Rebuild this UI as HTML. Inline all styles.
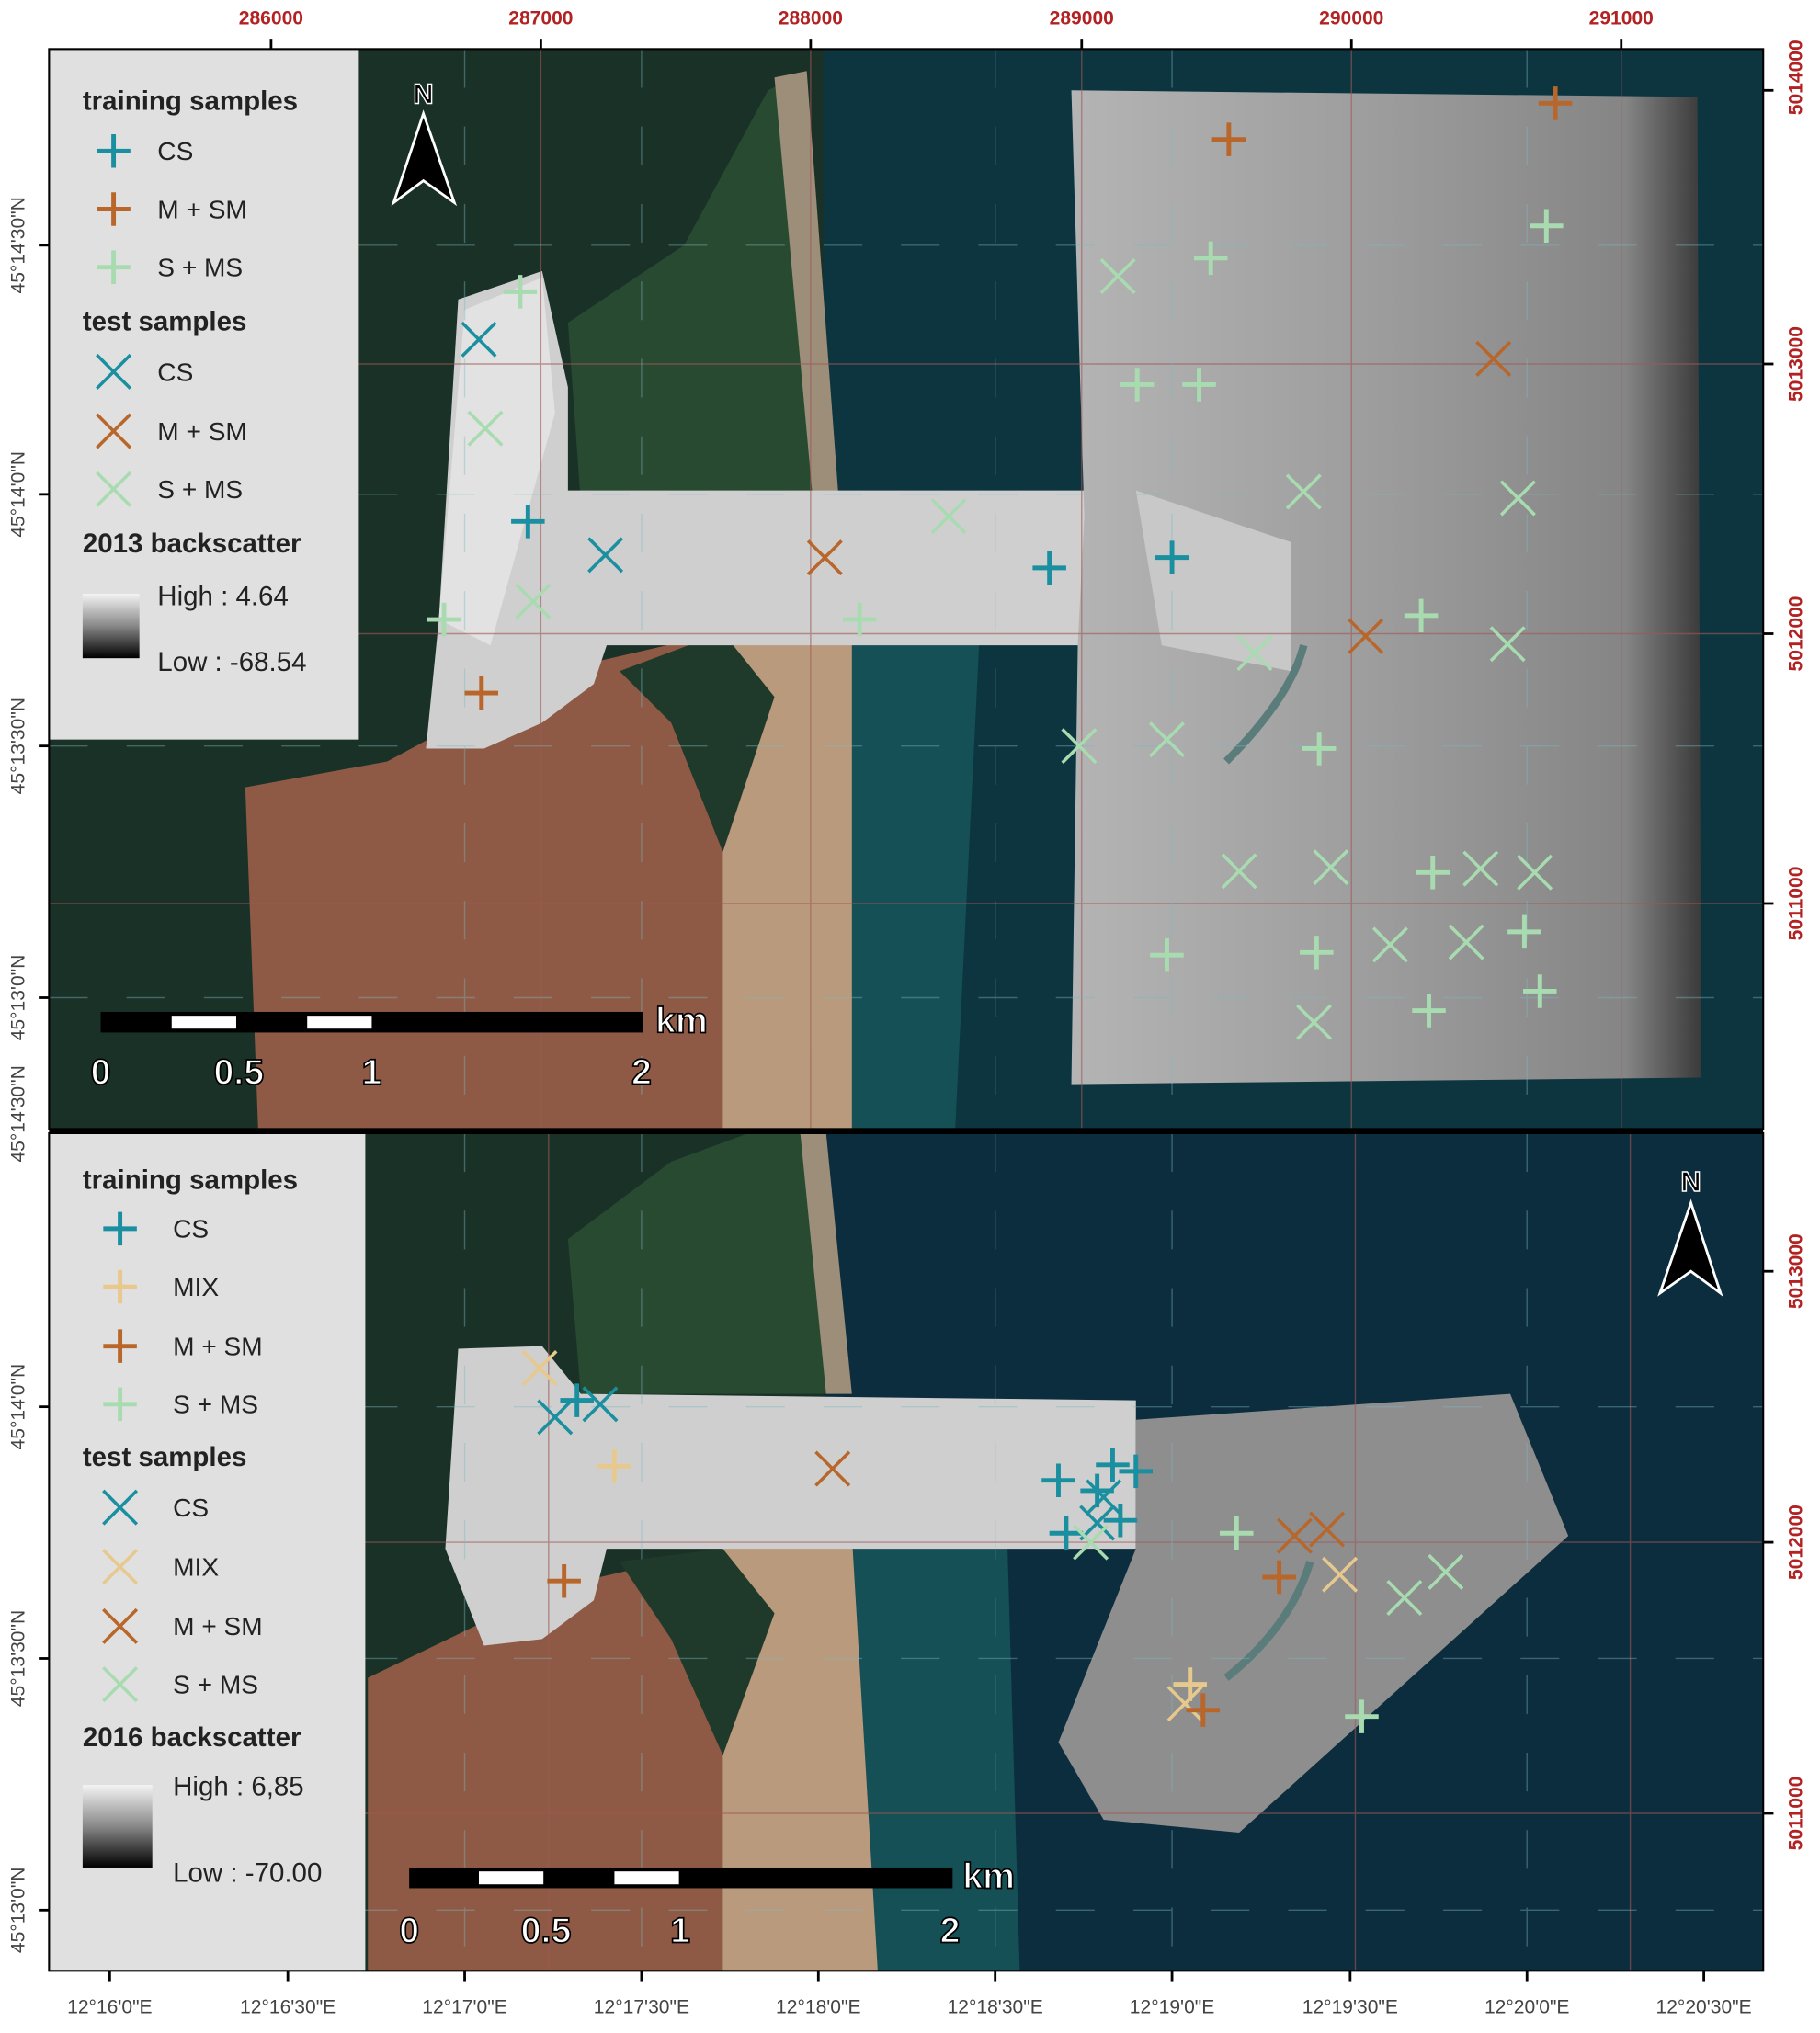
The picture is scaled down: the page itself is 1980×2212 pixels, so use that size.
<!DOCTYPE html>
<html><head><meta charset="utf-8"><style>
html,body{margin:0;padding:0;background:#fff;}
svg{display:block;}
text{font-family:"Liberation Sans",sans-serif;}
</style></head><body>
<svg width="1980" height="2212" viewBox="0 0 1410 1575.2" preserveAspectRatio="none" xmlns="http://www.w3.org/2000/svg">
<defs>
<linearGradient id="g1" x1="0" y1="0" x2="0" y2="1"><stop offset="0" stop-color="#f4f4f4"/><stop offset="0.5" stop-color="#888"/><stop offset="1" stop-color="#000"/></linearGradient>
<linearGradient id="sv" x1="0" y1="0" x2="1" y2="0"><stop offset="0" stop-color="#b4b4b4"/><stop offset="0.5" stop-color="#9c9c9c"/><stop offset="0.88" stop-color="#858585"/><stop offset="1" stop-color="#3a3a3a"/></linearGradient>
<clipPath id="c1"><rect x="38" y="38" width="1328" height="837"/></clipPath>
<clipPath id="c2"><rect x="38" y="878" width="1328" height="649"/></clipPath>
<g id="plus"><path d="M-13 0H13M0 -13V13" stroke-width="3.5" fill="none"/></g>
<g id="x"><path d="M-13 -13L13 13M13 -13L-13 13" stroke-width="2.5" fill="none"/></g>
</defs>
<rect width="1410" height="1576" fill="#fff"/>

<!-- TOP MAP -->
<g clip-path="url(#c1)">
<rect x="38" y="38" width="1328" height="837" fill="#0c3540"/>
<rect x="38" y="38" width="600" height="837" fill="#1a3128"/>
<polygon points="440,250 530,190 595,70 625,55 640,390 450,390" fill="#284a30"/>
<polygon points="600,60 625,55 650,390 630,390" fill="#9c8e78"/>
<polygon points="190,610 300,590 430,520 560,490 650,500 620,875 200,875" fill="#8e5a45"/>
<polygon points="560,490 660,480 700,560 660,875 560,875" fill="#b99a7c"/>
<polygon points="660,480 760,470 740,875 660,875" fill="#145055"/>
<polygon points="480,520 560,490 600,540 560,660 520,560" fill="#1f3a2a"/>
<polygon points="355,232 420,210 440,300 440,380 470,380 900,380 900,500 470,500 460,530 420,560 375,580 330,580 340,480" fill="#cfcfcf"/>
<polygon points="360,240 420,215 430,320 380,500 340,480" fill="#e2e2e2"/>
<polygon points="830,70 1315,75 1318,835 830,840 835,500 840,400" fill="url(#sv)"/>
<polygon points="880,380 1000,420 1000,520 900,500" fill="#c8c8c8"/>
<path d="M950,590 Q1000,540 1010,500" stroke="#5a7c7a" stroke-width="6" fill="none"/>
<g stroke="#a05858" stroke-width="1" opacity="0.6"><line x1="38" y1="282" x2="1366" y2="282"/><line x1="38" y1="491" x2="1366" y2="491"/><line x1="38" y1="700" x2="1366" y2="700"/><line x1="419" y1="38" x2="419" y2="875"/><line x1="628" y1="38" x2="628" y2="875"/><line x1="838" y1="38" x2="838" y2="875"/><line x1="1047" y1="38" x2="1047" y2="875"/><line x1="1256" y1="38" x2="1256" y2="875"/></g>
<g stroke="#7fb8c0" stroke-width="1" stroke-dasharray="30,30" opacity="0.4"><line x1="38" y1="190" x2="1366" y2="190"/><line x1="38" y1="383" x2="1366" y2="383"/><line x1="38" y1="578" x2="1366" y2="578"/><line x1="38" y1="773" x2="1366" y2="773"/><line x1="360" y1="38" x2="360" y2="875"/><line x1="497" y1="38" x2="497" y2="875"/><line x1="771" y1="38" x2="771" y2="875"/><line x1="908" y1="38" x2="908" y2="875"/><line x1="1183" y1="38" x2="1183" y2="875"/></g>
<g stroke="#1a8fa0"><use href="#plus" x="409" y="404"/><use href="#plus" x="813" y="440"/><use href="#plus" x="908" y="432"/><use href="#x" x="371" y="263"/><use href="#x" x="469" y="430"/></g>
<g stroke="#b8662a"><use href="#plus" x="952" y="108"/><use href="#plus" x="1205" y="80"/><use href="#plus" x="373" y="537"/><use href="#x" x="639" y="432"/><use href="#x" x="1157" y="278"/><use href="#x" x="1058" y="493"/></g>
<g stroke="#a8dcb0"><use href="#plus" x="403" y="226"/><use href="#plus" x="344" y="480"/><use href="#plus" x="666" y="480"/><use href="#plus" x="938" y="200"/><use href="#plus" x="881" y="298"/><use href="#plus" x="929" y="298"/><use href="#plus" x="1198" y="175"/><use href="#plus" x="1101" y="477"/><use href="#plus" x="1022" y="580"/><use href="#plus" x="1110" y="676"/><use href="#plus" x="904" y="740"/><use href="#plus" x="1020" y="738"/><use href="#plus" x="1181" y="722"/><use href="#plus" x="1107" y="783"/><use href="#plus" x="1193" y="768"/>
<use href="#x" x="376" y="332"/><use href="#x" x="413" y="466"/><use href="#x" x="735" y="400"/><use href="#x" x="866" y="214"/><use href="#x" x="1010" y="381"/><use href="#x" x="1176" y="386"/><use href="#x" x="972" y="506"/><use href="#x" x="1168" y="499"/><use href="#x" x="836" y="578"/><use href="#x" x="904" y="573"/><use href="#x" x="960" y="675"/><use href="#x" x="1031" y="672"/><use href="#x" x="1147" y="673"/><use href="#x" x="1189" y="676"/><use href="#x" x="1077" y="732"/><use href="#x" x="1136" y="730"/><use href="#x" x="1018" y="792"/></g>
<rect x="78" y="784" width="420" height="16" fill="#000"/><rect x="133" y="787" width="50" height="10" fill="#fff"/><rect x="238" y="787" width="50" height="10" fill="#fff"/>
<g font-size="28" font-weight="bold" fill="#fff" stroke="#000" stroke-width="1.2" text-anchor="middle"><text x="78" y="840">0</text><text x="185" y="840">0.5</text><text x="288" y="840">1</text><text x="497" y="840">2</text><text x="528" y="800">km</text></g>
<text x="328" y="80" font-family="Liberation Serif" font-weight="bold" font-size="22" fill="#000" stroke="#fff" stroke-width="1" text-anchor="middle">N</text>
<polygon points="328,88 352,157 328,140 305,157" fill="#000" stroke="#fff" stroke-width="2"/>
<rect x="38" y="38" width="240" height="535" fill="#e0e0e0"/>
<g font-size="20" fill="#222">
<text x="64" y="85" font-weight="bold" font-size="21">training samples</text>
<g stroke="#1a8fa0"><use href="#plus" x="88" y="117"/></g><text x="122" y="124">CS</text>
<g stroke="#b8662a"><use href="#plus" x="88" y="162"/></g><text x="122" y="169">M + SM</text>
<g stroke="#a8dcb0"><use href="#plus" x="88" y="207"/></g><text x="122" y="214">S + MS</text>
<text x="64" y="256" font-weight="bold" font-size="21">test samples</text>
<g stroke="#1a8fa0"><use href="#x" x="88" y="288"/></g><text x="122" y="295">CS</text>
<g stroke="#b8662a"><use href="#x" x="88" y="334"/></g><text x="122" y="341">M + SM</text>
<g stroke="#a8dcb0"><use href="#x" x="88" y="379"/></g><text x="122" y="386">S + MS</text>
<text x="64" y="428" font-weight="bold" font-size="21">2013 backscatter</text>
<rect x="64" y="460" width="44" height="50" fill="url(#g1)"/>
<text x="122" y="469" font-size="21">High : 4.64</text>
<text x="122" y="520" font-size="21">Low : -68.54</text>
</g>
</g>
<rect x="38" y="38" width="1328" height="837" fill="none" stroke="#000" stroke-width="1.5"/>
<rect x="38" y="874" width="1328" height="4" fill="#000"/>

<!-- BOTTOM MAP -->
<g clip-path="url(#c2)">
<rect x="38" y="878" width="1328" height="649" fill="#0c2d3e"/>
<rect x="38" y="878" width="600" height="649" fill="#1a3128"/>
<polygon points="440,960 520,900 580,878 640,878 650,1080 450,1080" fill="#284a30"/>
<polygon points="620,878 640,878 660,1080 640,1080" fill="#9c8e78"/>
<polygon points="285,1300 430,1230 560,1200 650,1210 620,1527 285,1527" fill="#8e5a45"/>
<polygon points="560,1200 660,1190 700,1260 680,1527 560,1527" fill="#b99a7c"/>
<polygon points="660,1190 780,1180 790,1527 680,1527" fill="#145055"/>
<polygon points="480,1210 560,1200 600,1250 560,1360 520,1270" fill="#1f3a2a"/>
<polygon points="355,1045 420,1043 450,1080 880,1085 880,1200 470,1200 460,1240 420,1270 375,1275 345,1200" fill="#cfcfcf"/>
<polygon points="880,1100 1170,1080 1215,1190 960,1420 855,1410 820,1350 880,1200" fill="#8e8e8e"/>
<path d="M950,1300 Q1000,1260 1015,1210" stroke="#5a7c7a" stroke-width="6" fill="none"/>
<g stroke="#a05858" stroke-width="1" opacity="0.6"><line x1="38" y1="1195" x2="1366" y2="1195"/><line x1="38" y1="1405" x2="1366" y2="1405"/><line x1="425" y1="878" x2="425" y2="1527"/><line x1="1050" y1="878" x2="1050" y2="1527"/><line x1="1263" y1="878" x2="1263" y2="1527"/></g>
<g stroke="#7fb8c0" stroke-width="1" stroke-dasharray="30,30" opacity="0.4"><line x1="38" y1="1090" x2="1366" y2="1090"/><line x1="38" y1="1285" x2="1366" y2="1285"/><line x1="38" y1="1480" x2="1366" y2="1480"/><line x1="360" y1="878" x2="360" y2="1527"/><line x1="497" y1="878" x2="497" y2="1527"/><line x1="771" y1="878" x2="771" y2="1527"/><line x1="908" y1="878" x2="908" y2="1527"/><line x1="1183" y1="878" x2="1183" y2="1527"/></g>
<g stroke="#1a8fa0"><use href="#plus" x="820" y="1147"/><use href="#plus" x="826" y="1188"/><use href="#plus" x="862" y="1135"/><use href="#plus" x="880" y="1140"/><use href="#plus" x="868" y="1178"/><use href="#plus" x="850" y="1155"/><use href="#plus" x="447" y="1085"/><use href="#x" x="430" y="1098"/><use href="#x" x="465" y="1088"/><use href="#x" x="855" y="1160"/><use href="#x" x="850" y="1180"/></g>
<g stroke="#e7c98e"><use href="#plus" x="476" y="1136"/><use href="#plus" x="922" y="1305"/><use href="#x" x="418" y="1060"/><use href="#x" x="1038" y="1220"/><use href="#x" x="918" y="1320"/></g>
<g stroke="#b8662a"><use href="#plus" x="437" y="1225"/><use href="#plus" x="991" y="1222"/><use href="#plus" x="932" y="1325"/><use href="#x" x="645" y="1138"/><use href="#x" x="1003" y="1190"/><use href="#x" x="1028" y="1185"/></g>
<g stroke="#a8dcb0"><use href="#plus" x="958" y="1188"/><use href="#plus" x="1055" y="1330"/><use href="#x" x="845" y="1195"/><use href="#x" x="1088" y="1238"/><use href="#x" x="1120" y="1218"/></g>
<rect x="317" y="1447" width="421" height="16" fill="#000"/><rect x="371" y="1450" width="50" height="10" fill="#fff"/><rect x="476" y="1450" width="50" height="10" fill="#fff"/>
<g font-size="28" font-weight="bold" fill="#fff" stroke="#000" stroke-width="1.2" text-anchor="middle"><text x="317" y="1505">0</text><text x="423" y="1505">0.5</text><text x="527" y="1505">1</text><text x="736" y="1505">2</text><text x="766" y="1463">km</text></g>
<text x="1310" y="923" font-family="Liberation Serif" font-weight="bold" font-size="22" fill="#000" stroke="#fff" stroke-width="1" text-anchor="middle">N</text>
<polygon points="1310,932 1333,1002 1310,985 1286,1002" fill="#000" stroke="#fff" stroke-width="2"/>
<rect x="38" y="878" width="245" height="649" fill="#e0e0e0"/>
<g font-size="20" fill="#222">
<text x="64" y="921" font-weight="bold" font-size="21">training samples</text>
<g stroke="#1a8fa0"><use href="#plus" x="93" y="952"/></g><text x="134" y="959">CS</text>
<g stroke="#e7c98e"><use href="#plus" x="93" y="997"/></g><text x="134" y="1004">MIX</text>
<g stroke="#b8662a"><use href="#plus" x="93" y="1043"/></g><text x="134" y="1050">M + SM</text>
<g stroke="#a8dcb0"><use href="#plus" x="93" y="1088"/></g><text x="134" y="1095">S + MS</text>
<text x="64" y="1136" font-weight="bold" font-size="21">test samples</text>
<g stroke="#1a8fa0"><use href="#x" x="93" y="1168"/></g><text x="134" y="1175">CS</text>
<g stroke="#e7c98e"><use href="#x" x="93" y="1214"/></g><text x="134" y="1221">MIX</text>
<g stroke="#b8662a"><use href="#x" x="93" y="1260"/></g><text x="134" y="1267">M + SM</text>
<g stroke="#a8dcb0"><use href="#x" x="93" y="1305"/></g><text x="134" y="1312">S + MS</text>
<text x="64" y="1353" font-weight="bold" font-size="21">2016 backscatter</text>
<rect x="64" y="1383" width="54" height="64" fill="url(#g1)"/>
<text x="134" y="1391" font-size="21">High : 6,85</text>
<text x="134" y="1458" font-size="21">Low : -70.00</text>
</g>
</g>
<rect x="38" y="878" width="1328" height="649" fill="none" stroke="#000" stroke-width="1.5"/>

<g font-size="15" font-weight="bold" fill="#b22222" text-anchor="middle">
<text x="210" y="19">286000</text><text x="419" y="19">287000</text><text x="628" y="19">288000</text><text x="838" y="19">289000</text><text x="1047" y="19">290000</text><text x="1256" y="19">291000</text>
<text transform="translate(1396,60) rotate(-90)">5014000</text>
<text transform="translate(1396,282) rotate(-90)">5013000</text>
<text transform="translate(1396,491) rotate(-90)">5012000</text>
<text transform="translate(1396,700) rotate(-90)">5011000</text>
<text transform="translate(1396,985) rotate(-90)">5013000</text>
<text transform="translate(1396,1195) rotate(-90)">5012000</text>
<text transform="translate(1396,1405) rotate(-90)">5011000</text>
</g>
<g stroke="#000" stroke-width="2"><line x1="210" y1="30" x2="210" y2="38"/><line x1="419" y1="30" x2="419" y2="38"/><line x1="628" y1="30" x2="628" y2="38"/><line x1="838" y1="30" x2="838" y2="38"/><line x1="1047" y1="30" x2="1047" y2="38"/><line x1="1256" y1="30" x2="1256" y2="38"/>
<line x1="1366" y1="70" x2="1374" y2="70"/><line x1="1366" y1="282" x2="1374" y2="282"/><line x1="1366" y1="491" x2="1374" y2="491"/><line x1="1366" y1="700" x2="1374" y2="700"/><line x1="1366" y1="985" x2="1374" y2="985"/><line x1="1366" y1="1195" x2="1374" y2="1195"/><line x1="1366" y1="1405" x2="1374" y2="1405"/>
<line x1="30" y1="190" x2="38" y2="190"/><line x1="30" y1="383" x2="38" y2="383"/><line x1="30" y1="578" x2="38" y2="578"/><line x1="30" y1="773" x2="38" y2="773"/><line x1="30" y1="1090" x2="38" y2="1090"/><line x1="30" y1="1285" x2="38" y2="1285"/><line x1="30" y1="1480" x2="38" y2="1480"/>
<line x1="85" y1="1527" x2="85" y2="1535"/><line x1="223" y1="1527" x2="223" y2="1535"/><line x1="360" y1="1527" x2="360" y2="1535"/><line x1="497" y1="1527" x2="497" y2="1535"/><line x1="634" y1="1527" x2="634" y2="1535"/><line x1="771" y1="1527" x2="771" y2="1535"/><line x1="908" y1="1527" x2="908" y2="1535"/><line x1="1046" y1="1527" x2="1046" y2="1535"/><line x1="1183" y1="1527" x2="1183" y2="1535"/><line x1="1320" y1="1527" x2="1320" y2="1535"/></g>
<g font-size="15" fill="#444" text-anchor="middle">
<text transform="translate(19,190) rotate(-90)">45°14'30"N</text>
<text transform="translate(19,383) rotate(-90)">45°14'0"N</text>
<text transform="translate(19,578) rotate(-90)">45°13'30"N</text>
<text transform="translate(19,773) rotate(-90)">45°13'0"N</text>
<text transform="translate(19,863) rotate(-90)">45°14'30"N</text>
<text transform="translate(19,1090) rotate(-90)">45°14'0"N</text>
<text transform="translate(19,1285) rotate(-90)">45°13'30"N</text>
<text transform="translate(19,1480) rotate(-90)">45°13'0"N</text>
<text x="85" y="1560">12°16'0"E</text><text x="223" y="1560">12°16'30"E</text><text x="360" y="1560">12°17'0"E</text><text x="497" y="1560">12°17'30"E</text><text x="634" y="1560">12°18'0"E</text><text x="771" y="1560">12°18'30"E</text><text x="908" y="1560">12°19'0"E</text><text x="1046" y="1560">12°19'30"E</text><text x="1183" y="1560">12°20'0"E</text><text x="1320" y="1560">12°20'30"E</text>
</g>
</svg>
</body></html>
